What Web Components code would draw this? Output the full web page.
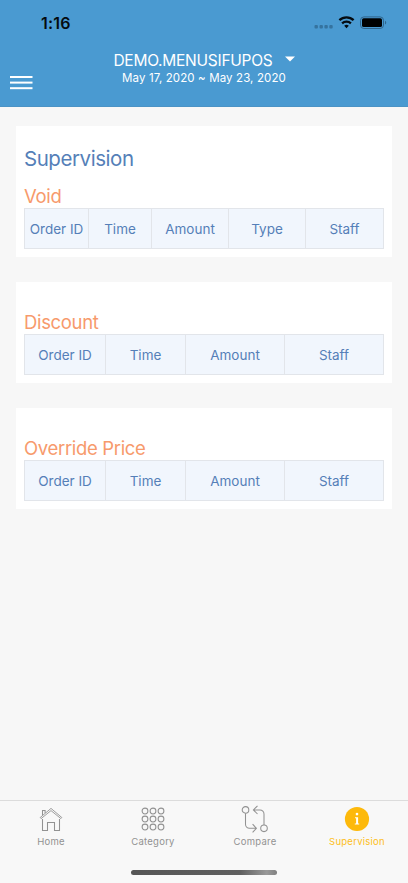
<!DOCTYPE html>
<html lang="en">
<head>
<meta charset="utf-8">
<meta name="viewport" content="width=device-width, initial-scale=1">
<title>Supervision</title>
<style>
  html, body {
    margin: 0;
    height: 100%;
    background: #f7f7f7;
    font-family: Inter, "Liberation Sans", sans-serif;
  }
</style>
</head>
<body>
<pos-app>
  <app-header slot="header" store="DEMO.MENUSIFUPOS" range="May 17, 2020 ~ May 23, 2020">
    <status-bar time="1:16"></status-bar>
  </app-header>
  <report-card heading="Supervision" name="Void">
    <report-table columns="Order ID,Time,Amount,Type,Staff" widths="64fr 63fr 77fr 77fr 78fr"></report-table>
  </report-card>
  <report-card name="Discount">
    <report-table columns="Order ID,Time,Amount,Staff" widths="81fr 80fr 99fr 99fr"></report-table>
  </report-card>
  <report-card name="Override Price">
    <report-table columns="Order ID,Time,Amount,Staff" widths="81fr 80fr 99fr 99fr"></report-table>
  </report-card>
  <tab-bar slot="footer">
    <tab-item icon="home">Home</tab-item>
    <tab-item icon="category">Category</tab-item>
    <tab-item icon="compare">Compare</tab-item>
    <tab-item icon="info" active>Supervision</tab-item>
  </tab-bar>
</pos-app>

<script>
class BaseElement extends HTMLElement {

  connectedCallback() {
    if (!this.shadowRoot) {
      this.attachShadow({mode: 'open'});
      this.render();
    }
  }

  attr(name) {
    return this.getAttribute(name) || '';
  }

  render() {
    const template = document.createElement('template');
    template.innerHTML = this.template();
    this.shadowRoot.appendChild(template.content.cloneNode(true));
  }
}

class PosApp extends BaseElement {
  template() {
    return `
      <style>
        :host {
          display: flex;
          flex-direction: column;
          height: 100vh;
        }
        main {
          flex: 1;
          min-height: 0;
          display: flex;
          flex-direction: column;
          gap: 25px;
          padding: 19px 16px 0;
        }
      </style>
      <slot name="header"></slot>
      <main><slot></slot></main>
      <slot name="footer"></slot>
    `;
  }
}

class StatusBar extends BaseElement {
  template() {
    return `
      <style>
        :host {
          display: flex;
          justify-content: space-between;
          align-items: center;
          height: 46px;
          padding: 0 21px 0 41px;
          box-sizing: border-box;
          color: #050b10;
        }
        .time {
          font-size: 16px;
          font-weight: 600;
          letter-spacing: 0.2px;
        }
        svg { display: block; }
      </style>
      <span class="time">${this.attr('time')}</span>
      <svg width="73" height="16" viewBox="0 0 73 16">
        <g fill="#35739f">
          <rect x="0.5" y="10" width="3.4" height="3.4" rx="1"/>
          <rect x="5.5" y="10" width="3.4" height="3.4" rx="1"/>
          <rect x="10.4" y="10" width="3.4" height="3.4" rx="1"/>
          <rect x="15.3" y="10" width="3.4" height="3.4" rx="1"/>
        </g>
        <g fill="none" stroke="#050b10" stroke-width="2.3">
          <path d="M25.4 5.2a10.2 10.2 0 0 1 14.2 0"/>
          <path d="M28.1 8.4a6.3 6.3 0 0 1 8.8 0"/>
        </g>
        <path d="M32.5 13.2l-2.3-2.4a3.3 3.3 0 0 1 4.6 0z" fill="#050b10"/>
        <rect x="46.5" y="1.9" width="23" height="11.6" rx="3.4" fill="none" stroke="#2f658c"/>
        <rect x="48" y="3.3" width="20" height="8.8" rx="1.7" fill="#000"/>
        <path d="M71 5.8c1.7.5 1.7 3.3 0 3.8z" fill="#2f658c"/>
      </svg>
    `;
  }
}

class AppHeader extends BaseElement {
  template() {
    return `
      <style>
        :host {
          display: block;
          height: 107px;
          box-sizing: border-box;
          background: #4a9ad1;
          border-bottom: 1px solid #4b93c5;
          color: #fff;
        }
        .bar {
          display: grid;
          grid-template-columns: 44px 1fr 44px;
          height: 60px;
        }
        .menu {
          padding: 29px 0 0 10px;
        }
        .title {
          display: flex;
          flex-direction: column;
          align-items: center;
          padding-top: 5px;
        }
        .store {
          display: flex;
          align-items: center;
          gap: 12px;
          font-size: 15.5px;
          line-height: 20px;
          letter-spacing: -0.25px;
        }
        .store svg { margin-bottom: 4px; }
        .range {
          font-size: 11.5px;
          line-height: 15px;
          letter-spacing: 0.12px;
        }
        svg { display: block; }
      </style>
      <slot></slot>
      <div class="bar">
        <div class="menu">
          <svg width="23" height="16" viewBox="0 0 23 16" fill="#fff">
            <rect y="1" width="22.5" height="2"/>
            <rect y="6.6" width="22.5" height="2"/>
            <rect y="12.2" width="22.5" height="2"/>
          </svg>
        </div>
        <div class="title">
          <div class="store">
            <span>${this.attr('store')}</span>
            <svg width="10" height="6" viewBox="0 0 10 6"><path d="M0 .4h10L5 5.6z" fill="#fff"/></svg>
          </div>
          <div class="range">${this.attr('range')}</div>
        </div>
      </div>
    `;
  }
}

class ReportCard extends BaseElement {
  template() {
    const heading = this.attr('heading');
    return `
      <style>
        :host {
          display: block;
          padding: 0 8px 8px;
          background: #fff;
        }
        h1, h2 {
          margin: 0;
          font-weight: 400;
        }
        h1 {
          padding-top: 18px;
          font-size: 20.5px;
          line-height: 30px;
          letter-spacing: -0.45px;
          color: #557fb8;
        }
        h2 {
          padding-top: 29px;
          font-size: 18.5px;
          line-height: 23px;
          letter-spacing: -0.33px;
          color: #f79a6c;
        }
        h1 + h2 { padding-top: 11px; }
      </style>
      ${heading ? `<h1>${heading}</h1>` : ''}
      <h2>${this.attr('name')}</h2>
      <slot></slot>
    `;
  }
}

class ReportTable extends BaseElement {
  template() {
    return `
      <style>
        :host {
          display: grid;
          grid-template-columns: ${this.attr('widths')};
          height: 41px;
          box-sizing: border-box;
          border: 1px solid #e2e5ea;
          border-right: 0;
          background: #f1f6fd;
          color: #557fb8;
          font-size: 13.5px;
        }
        .cell {
          display: flex;
          align-items: center;
          justify-content: center;
          min-width: 0;
          border-right: 1px solid #e2e5ea;
          white-space: nowrap;
        }
      </style>
      ${this.attr('columns').split(',').map(column => `<div class="cell">${column}</div>`).join('')}
    `;
  }
}

class TabBar extends BaseElement {
  template() {
    return `
      <style>
        :host {
          display: flex;
          flex-direction: column;
          align-items: center;
          height: 83px;
          box-sizing: border-box;
          border-top: 1px solid #dcdcdc;
          background: #f8f8f8;
        }
        .tabs {
          display: grid;
          grid-template-columns: repeat(4, 1fr);
          width: 100%;
          height: 69px;
        }
        .indicator {
          width: 146px;
          height: 5px;
          border-radius: 3px;
          background: linear-gradient(to right, #555 0%, #606060 75%, #999 93%, #808080 100%);
        }
      </style>
      <div class="tabs"><slot></slot></div>
      <div class="indicator"></div>
    `;
  }
}

const icons = {
  home: `
    <path d="M6.5 15v11.5h5v-8h7v8h5V15"/>
    <path d="M4.2 13.5L15 4.4l10.8 9.1-.9 1.1L15 6.6l-9.9 8z" stroke-width="0.9"/>
    <path d="M6.5 11.3V6.5h2.6v2.6"/>`,
  category: [7, 15, 23].map(y => [7, 15, 23].map(x =>
    `<circle cx="${x}" cy="${y}" r="2.9"/>`).join('')).join(''),
  compare: `
    <circle cx="5.5" cy="5.9" r="3.3"/>
    <circle cx="24" cy="24.3" r="3.3"/>
    <path d="M5.5 9.2v11.1a4 4 0 0 0 4 4h6.6M12.6 20.2l3.8 4.1-3.8 4.1M24 21V9.9a4 4 0 0 0-4-4h-6.4M17.5 1.8l-4.1 4.1 4.1 4.1"/>`,
  info: `
    <circle cx="15" cy="15" r="12.1" fill="#fdb90b" stroke="none"/>
    <circle cx="15" cy="10.1" r="1.35" fill="#fff" stroke="none"/>
    <path d="M13 13.2h3.1v6.2h1.1v1.1h-4.4v-1.1h1.3v-5.1H13z" fill="#fff" stroke="none"/>`
};

class TabItem extends BaseElement {
  template() {
    return `
      <style>
        :host {
          display: flex;
          flex-direction: column;
          align-items: center;
          padding-top: 3px;
          color: #929292;
          font-size: 9.5px;
          line-height: 14px;
          letter-spacing: 0.25px;
        }
        :host([active]) { color: #fdbe20; }
        svg {
          display: block;
          fill: none;
          stroke: #929292;
          stroke-width: 1.05;
        }
      </style>
      <svg width="30" height="31" viewBox="0 0 30 31">${icons[this.attr('icon')]}</svg>
      <span><slot></slot></span>
    `;
  }
}

customElements.define('pos-app', PosApp);
customElements.define('status-bar', StatusBar);
customElements.define('app-header', AppHeader);
customElements.define('report-card', ReportCard);
customElements.define('report-table', ReportTable);
customElements.define('tab-bar', TabBar);
customElements.define('tab-item', TabItem);
</script>
</body>
</html>
